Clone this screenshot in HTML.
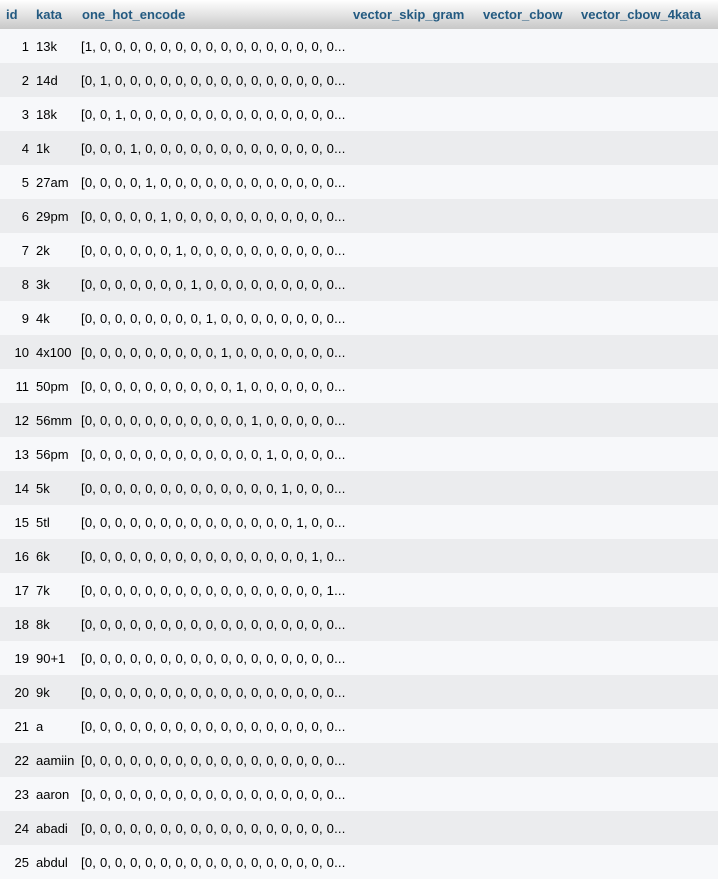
<!DOCTYPE html>
<html><head><style>
body{margin:0;background:#fff;font-family:"Liberation Sans",Arial,sans-serif;font-size:13px;color:#000}
table{border-collapse:collapse;width:718px;table-layout:fixed}
th{height:29px;background:linear-gradient(#fff,#c8c8c8);color:#235a81;font-weight:bold;text-align:left;padding:0 0 0 6px;white-space:nowrap}
td{height:34px;padding:0;white-space:nowrap;overflow:hidden}
td.o{letter-spacing:0.22px}
tr:nth-child(odd) td{background:#f7f8fa}
tr:nth-child(even) td{background:#ebecee}
td.id{text-align:right;padding-right:6px}
td.k{padding-left:1px;overflow:visible}
</style></head><body>
<table>
<colgroup><col style="width:35px"><col style="width:46px"><col style="width:266px"><col style="width:130px"><col style="width:99px"><col></colgroup>
<thead><tr><th>id</th><th style="padding-left:1px">kata</th><th style="padding-left:1px">one_hot_encode</th><th>vector_skip_gram</th><th>vector_cbow</th><th style="padding-left:5px">vector_cbow_4kata</th></tr></thead>
<tbody>
<tr><td class="id">1</td><td class="k">13k</td><td class="o">[1, 0, 0, 0, 0, 0, 0, 0, 0, 0, 0, 0, 0, 0, 0, 0, 0...</td><td></td><td></td><td></td></tr>
<tr><td class="id">2</td><td class="k">14d</td><td class="o">[0, 1, 0, 0, 0, 0, 0, 0, 0, 0, 0, 0, 0, 0, 0, 0, 0...</td><td></td><td></td><td></td></tr>
<tr><td class="id">3</td><td class="k">18k</td><td class="o">[0, 0, 1, 0, 0, 0, 0, 0, 0, 0, 0, 0, 0, 0, 0, 0, 0...</td><td></td><td></td><td></td></tr>
<tr><td class="id">4</td><td class="k">1k</td><td class="o">[0, 0, 0, 1, 0, 0, 0, 0, 0, 0, 0, 0, 0, 0, 0, 0, 0...</td><td></td><td></td><td></td></tr>
<tr><td class="id">5</td><td class="k">27am</td><td class="o">[0, 0, 0, 0, 1, 0, 0, 0, 0, 0, 0, 0, 0, 0, 0, 0, 0...</td><td></td><td></td><td></td></tr>
<tr><td class="id">6</td><td class="k">29pm</td><td class="o">[0, 0, 0, 0, 0, 1, 0, 0, 0, 0, 0, 0, 0, 0, 0, 0, 0...</td><td></td><td></td><td></td></tr>
<tr><td class="id">7</td><td class="k">2k</td><td class="o">[0, 0, 0, 0, 0, 0, 1, 0, 0, 0, 0, 0, 0, 0, 0, 0, 0...</td><td></td><td></td><td></td></tr>
<tr><td class="id">8</td><td class="k">3k</td><td class="o">[0, 0, 0, 0, 0, 0, 0, 1, 0, 0, 0, 0, 0, 0, 0, 0, 0...</td><td></td><td></td><td></td></tr>
<tr><td class="id">9</td><td class="k">4k</td><td class="o">[0, 0, 0, 0, 0, 0, 0, 0, 1, 0, 0, 0, 0, 0, 0, 0, 0...</td><td></td><td></td><td></td></tr>
<tr><td class="id">10</td><td class="k">4x100</td><td class="o">[0, 0, 0, 0, 0, 0, 0, 0, 0, 1, 0, 0, 0, 0, 0, 0, 0...</td><td></td><td></td><td></td></tr>
<tr><td class="id">11</td><td class="k">50pm</td><td class="o">[0, 0, 0, 0, 0, 0, 0, 0, 0, 0, 1, 0, 0, 0, 0, 0, 0...</td><td></td><td></td><td></td></tr>
<tr><td class="id">12</td><td class="k">56mm</td><td class="o">[0, 0, 0, 0, 0, 0, 0, 0, 0, 0, 0, 1, 0, 0, 0, 0, 0...</td><td></td><td></td><td></td></tr>
<tr><td class="id">13</td><td class="k">56pm</td><td class="o">[0, 0, 0, 0, 0, 0, 0, 0, 0, 0, 0, 0, 1, 0, 0, 0, 0...</td><td></td><td></td><td></td></tr>
<tr><td class="id">14</td><td class="k">5k</td><td class="o">[0, 0, 0, 0, 0, 0, 0, 0, 0, 0, 0, 0, 0, 1, 0, 0, 0...</td><td></td><td></td><td></td></tr>
<tr><td class="id">15</td><td class="k">5tl</td><td class="o">[0, 0, 0, 0, 0, 0, 0, 0, 0, 0, 0, 0, 0, 0, 1, 0, 0...</td><td></td><td></td><td></td></tr>
<tr><td class="id">16</td><td class="k">6k</td><td class="o">[0, 0, 0, 0, 0, 0, 0, 0, 0, 0, 0, 0, 0, 0, 0, 1, 0...</td><td></td><td></td><td></td></tr>
<tr><td class="id">17</td><td class="k">7k</td><td class="o">[0, 0, 0, 0, 0, 0, 0, 0, 0, 0, 0, 0, 0, 0, 0, 0, 1...</td><td></td><td></td><td></td></tr>
<tr><td class="id">18</td><td class="k">8k</td><td class="o">[0, 0, 0, 0, 0, 0, 0, 0, 0, 0, 0, 0, 0, 0, 0, 0, 0...</td><td></td><td></td><td></td></tr>
<tr><td class="id">19</td><td class="k">90+1</td><td class="o">[0, 0, 0, 0, 0, 0, 0, 0, 0, 0, 0, 0, 0, 0, 0, 0, 0...</td><td></td><td></td><td></td></tr>
<tr><td class="id">20</td><td class="k">9k</td><td class="o">[0, 0, 0, 0, 0, 0, 0, 0, 0, 0, 0, 0, 0, 0, 0, 0, 0...</td><td></td><td></td><td></td></tr>
<tr><td class="id">21</td><td class="k">a</td><td class="o">[0, 0, 0, 0, 0, 0, 0, 0, 0, 0, 0, 0, 0, 0, 0, 0, 0...</td><td></td><td></td><td></td></tr>
<tr><td class="id">22</td><td class="k">aamiin</td><td class="o">[0, 0, 0, 0, 0, 0, 0, 0, 0, 0, 0, 0, 0, 0, 0, 0, 0...</td><td></td><td></td><td></td></tr>
<tr><td class="id">23</td><td class="k">aaron</td><td class="o">[0, 0, 0, 0, 0, 0, 0, 0, 0, 0, 0, 0, 0, 0, 0, 0, 0...</td><td></td><td></td><td></td></tr>
<tr><td class="id">24</td><td class="k">abadi</td><td class="o">[0, 0, 0, 0, 0, 0, 0, 0, 0, 0, 0, 0, 0, 0, 0, 0, 0...</td><td></td><td></td><td></td></tr>
<tr><td class="id">25</td><td class="k">abdul</td><td class="o">[0, 0, 0, 0, 0, 0, 0, 0, 0, 0, 0, 0, 0, 0, 0, 0, 0...</td><td></td><td></td><td></td></tr>
</tbody></table>
</body></html>
